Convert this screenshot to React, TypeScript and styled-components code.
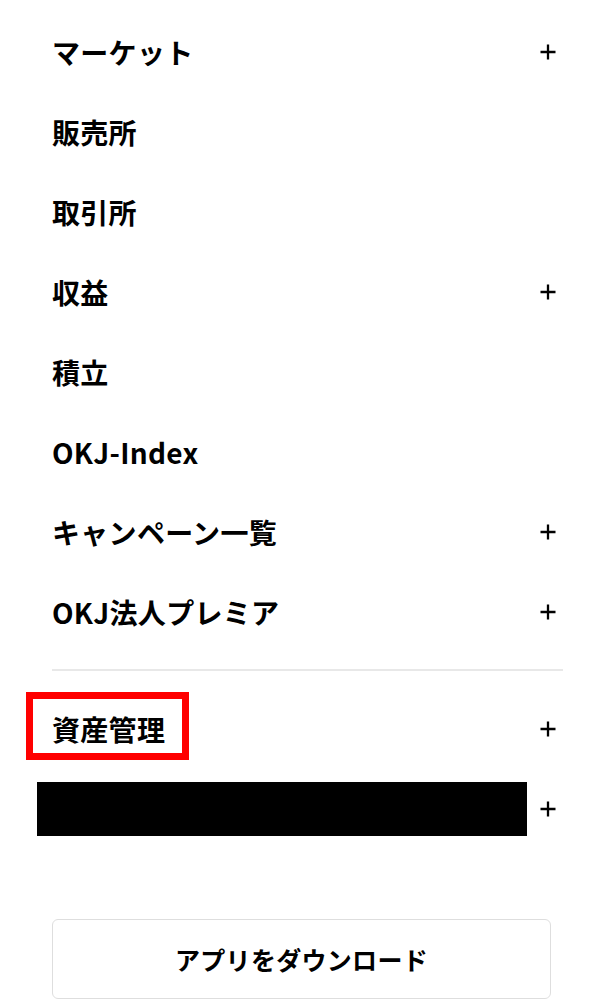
import React from 'react';
import styled, { createGlobalStyle } from 'styled-components';

const GlobalStyle = createGlobalStyle`
	body {
		margin: 0;
		background: #fff;
		font-family: "Noto Sans CJK JP", "Noto Sans", sans-serif;
		color: #000;
	}
`;

const Menu = styled.nav`
	display: flex;
	flex-direction: column;
	padding: 12px 37px 0 52px;
`;

const Row = styled.div`
	display: flex;
	align-items: center;
	justify-content: space-between;
	height: 80px;
`;

const Label = styled.span<{ $marked?: boolean }>`
	position: relative;
	font-size: 28px;
	line-height: 1;
	font-weight: 700;
	letter-spacing: 0.3px;

	${(p) =>
		p.$marked &&
		`
		&::after {
			content: '';
			position: absolute;
			top: -23px;
			bottom: -17px;
			left: -26px;
			right: -24px;
			border: 7px solid #ff0000;
		}
	`}
`;

const Redacted = styled.div`
	width: 490px;
	height: 54px;
	margin-left: -15px;
	background: #000;
`;

const Plus = styled.svg`
	width: 22px;
	height: 22px;
	margin-right: 4px;
	flex-shrink: 0;
`;

const Divider = styled.hr`
	border: none;
	height: 2px;
	background: #e8e8e8;
	margin: 17px 0 18px 0;
	width: 511px;
`;

const DownloadButton = styled.button`
	all: unset;
	box-sizing: border-box;
	margin-top: 70px;
	width: 499px;
	height: 80px;
	border: 1.5px solid #dedede;
	border-radius: 6px;
	display: flex;
	align-items: center;
	justify-content: center;
	font-size: 25px;
	font-weight: 700;
	letter-spacing: 0.3px;
`;

function PlusIcon() {
	return (
		<Plus viewBox='0 0 22 22'>
			<path d='M11 3.5v15M3.5 11h15' stroke='#000' strokeWidth='2.3' fill='none' />
		</Plus>
	);
}

const items: { label: string; expand: boolean }[] = [
	{ label: 'マーケット', expand: true },
	{ label: '販売所', expand: false },
	{ label: '取引所', expand: false },
	{ label: '収益', expand: true },
	{ label: '積立', expand: false },
	{ label: 'OKJ-Index', expand: false },
	{ label: 'キャンペーン一覧', expand: true },
	{ label: 'OKJ法人プレミア', expand: true },
];

function App() {
	return (
		<>
			<GlobalStyle />
			<Menu>
				{items.map((item) => (
					<Row key={item.label}>
						<Label>{item.label}</Label>
						{item.expand && <PlusIcon />}
					</Row>
				))}
				<Divider />
				<Row>
					<Label $marked>資産管理</Label>
					<PlusIcon />
				</Row>
				<Row>
					<Redacted />
					<PlusIcon />
				</Row>
				<DownloadButton>アプリをダウンロード</DownloadButton>
			</Menu>
		</>
	);
}

export default App;
